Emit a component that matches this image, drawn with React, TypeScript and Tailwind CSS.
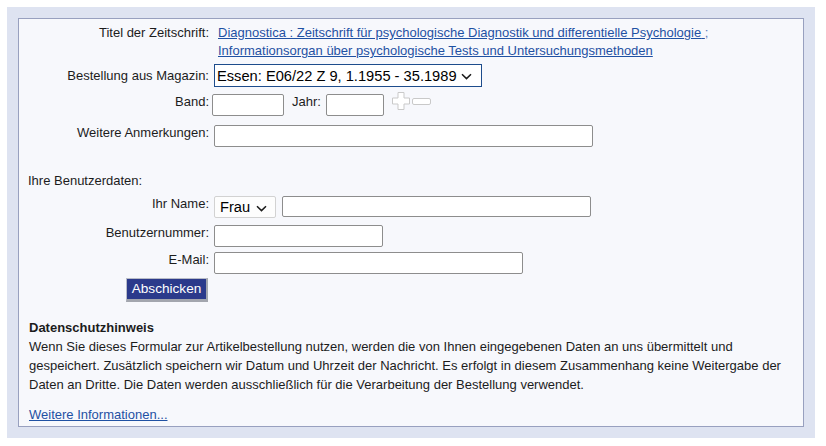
import React from "react";

const inputCls =
  "block bg-white border border-[#8d8d8d] rounded-[2px] outline-none";

function Chevron({ className }: { className?: string }) {
  return (
    <svg className={className} width="11" height="7" viewBox="0 0 11 7" fill="none">
      <path d="M1 1.2 L5.5 5.6 L10 1.2" stroke="#1a1a1a" strokeWidth="1.5" />
    </svg>
  );
}

export default function App() {
  return (
    <div className="w-[826px] h-[446px] bg-white pt-[7px] pl-[7px] font-['Liberation_Sans',Arial,sans-serif] text-[13px] text-[#1c1c1c]">
      <div className="w-[808px] h-[431px] bg-[#dee3f1] p-[11px]">
        <div className="h-full border border-[#98a0bf] bg-[#f7f8fc] px-[10px] pt-[5px]">
          {/* Titel */}
          <div className="flex items-start">
            <div className="w-[180px] text-right leading-[18px]">Titel der Zeitschrift:</div>
            <div className="ml-[9px] leading-[18px] text-[#1f51a3]">
              <a href="#" className="underline">
                Diagnostica : Zeitschrift für psychologische Diagnostik und differentielle Psychologie{" "}
              </a>
              <span className="text-[#5a7bb8]">;</span>
              <br />
              <a href="#" className="underline">
                Informationsorgan über psychologische Tests und Untersuchungsmethoden
              </a>
            </div>
          </div>

          {/* Bestellung */}
          <div className="flex items-center mt-[4px]">
            <div className="w-[180px] text-right leading-[16px]">Bestellung aus Magazin:</div>
            <div className="ml-[5px] relative w-[268px] h-[23px] border-[1.5px] border-[#1d4c8c] bg-white flex items-center">
              <span className="pl-[2px] text-[14.67px] leading-[18px] text-black">
                Essen: E06/22 Z 9, 1.1955 - 35.1989
              </span>
              <Chevron className="absolute right-[9px] top-[8px]" />
            </div>
          </div>

          {/* Band / Jahr */}
          <div className="flex items-start mt-[7px]">
            <div className="w-[180px] text-right leading-[16px]">Band:</div>
            <input className={inputCls + " ml-[3px] w-[72px] h-[22px]"} />
            <span className="ml-[8px] leading-[16px]">Jahr:</span>
            <input className={inputCls + " ml-[5px] w-[58px] h-[22px]"} />
            <svg className="ml-[8px] mt-[-2px]" width="18" height="18" viewBox="0 0 18 18">
              <path
                d="M6 0.5 H12 V6 H17.5 V12 H12 V17.5 H6 V12 H0.5 V6 H6 Z"
                fill="#ffffff"
                stroke="#c9c9c9"
                strokeLinejoin="round"
              />
            </svg>
            <svg className="ml-[2px] mt-[4px]" width="19" height="7" viewBox="0 0 19 7">
              <rect x="0.5" y="0.5" width="18" height="6" rx="1.5" fill="#ffffff" stroke="#c9c9c9" />
            </svg>
          </div>

          {/* Anmerkungen */}
          <div className="flex items-start mt-[9px]">
            <div className="w-[180px] text-right leading-[16px]">Weitere Anmerkungen:</div>
            <input className={inputCls + " ml-[5px] w-[379px] h-[22px]"} />
          </div>

          {/* Benutzerdaten */}
          <div className="mt-[26px] leading-[16px] -ml-[1px]">Ihre Benutzerdaten:</div>

          <div className="flex items-start mt-[7px]">
            <div className="w-[180px] text-right leading-[16px]">Ihr Name:</div>
            <div className="ml-[5px] relative w-[62px] h-[22px] border border-[#d2d2d2] rounded-[2px] bg-[#fdfdfd] flex items-center">
              <span className="pl-[5px] text-[14.67px] leading-[18px] text-black">Frau</span>
              <Chevron className="absolute right-[8px] top-[8px]" />
            </div>
            <input className={inputCls + " ml-[6px] w-[309px] h-[21px]"} />
          </div>

          <div className="flex items-start mt-[7px]">
            <div className="w-[180px] text-right leading-[16px]">Benutzernummer:</div>
            <input className={inputCls + " ml-[5px] w-[169px] h-[22px]"} />
          </div>

          <div className="flex items-start mt-[5px]">
            <div className="w-[180px] text-right leading-[16px]">E-Mail:</div>
            <input className={inputCls + " ml-[5px] w-[309px] h-[22px]"} />
          </div>

          <div className="mt-[4px] ml-[97px]">
            <button className="w-[82px] h-[24px] bg-[#2b3a8b] text-white text-[13.6px] leading-[18px] border-t border-l border-[#b8bcc8] border-r-2 border-b-[3px] border-r-[#a3a6ae] border-b-[#a3a6ae] pb-[1px]">
              Abschicken
            </button>
          </div>

          {/* Datenschutz */}
          <div className="mt-[16px] leading-[19px]">
            <div className="font-bold">Datenschutzhinweis</div>
            <p>
              Wenn Sie dieses Formular zur Artikelbestellung nutzen, werden die von Ihnen eingegebenen Daten an uns übermittelt und gespeichert. Zusätzlich speichern wir Datum und Uhrzeit der Nachricht. Es erfolgt in diesem Zusammenhang keine Weitergabe der Daten an Dritte. Die Daten werden ausschließlich für die Verarbeitung der Bestellung verwendet.
            </p>
          </div>
          <div className="mt-[11px] leading-[19px]">
            <a href="#" className="underline text-[#1f51a3]">Weitere Informationen...</a>
          </div>
        </div>
      </div>
    </div>
  );
}
